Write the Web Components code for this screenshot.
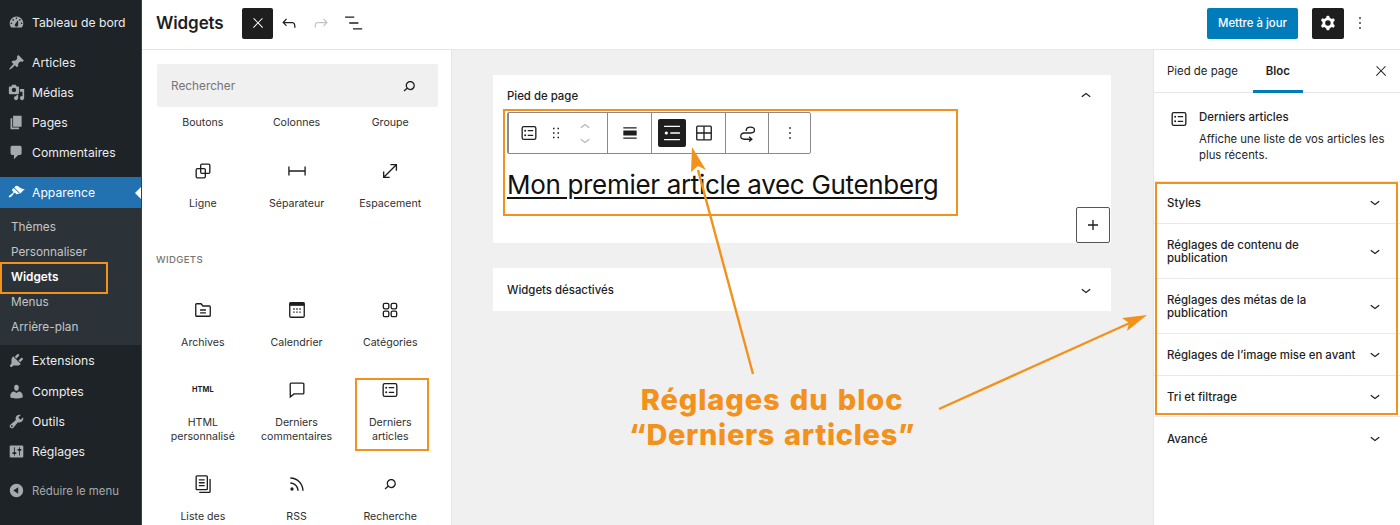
<!DOCTYPE html>
<html lang="fr">
<head>
<meta charset="utf-8">
<title>Widgets</title>
<style>
  html, body { margin: 0; height: 525px; overflow: hidden; background: #fff; }
  body { display: flex; font-family: Inter, "Liberation Sans", sans-serif; color: #1e1e1e; position: relative; }
</style>
</head>
<body>
  <admin-menu></admin-menu>
  <widgets-editor></widgets-editor>
  <note-overlay></note-overlay>

<script>
const ICONS = {
  // wp admin menu
  dashboard: '<path fill-rule="evenodd" d="M3.76 16h12.48c1.1-1.37 1.76-3.11 1.76-5 0-4.42-3.58-8-8-8s-8 3.58-8 8c0 1.89.66 3.63 1.76 5zM10 4c.55 0 1 .45 1 1s-.45 1-1 1-1-.45-1-1 .45-1 1-1zM6 6c.55 0 1 .45 1 1s-.45 1-1 1-1-.45-1-1 .45-1 1-1zm8 0c.55 0 1 .45 1 1s-.45 1-1 1-1-.45-1-1 .45-1 1-1zm-5.37 5.55L12 7v6c0 1.1-.9 2-2 2s-2-.9-2-2c0-.57.24-1.08.63-1.45zM4 10c.55 0 1 .45 1 1s-.45 1-1 1-1-.45-1-1 .45-1 1-1zm12 0c.55 0 1 .45 1 1s-.45 1-1 1-1-.45-1-1 .45-1 1-1z"/>',
  pin: '<path d="M10.44 3.02l1.82-1.82 6.36 6.35-1.83 1.82c-1.05-.68-2.48-.57-3.41.36l-.75.75c-.92.93-1.04 2.35-.35 3.41l-1.83 1.82-2.41-2.41-2.8 2.79c-.42.42-3.38 2.71-3.8 2.29s1.86-3.39 2.28-3.81l2.79-2.79L4.1 9.36l1.83-1.82c1.05.69 2.48.57 3.4-.36l.75-.75c.93-.92 1.05-2.35.36-3.41z"/>',
  media: '<path fill-rule="evenodd" d="M13 11V4c0-.55-.45-1-1-1h-1.67L9 1H5L3.67 3H2c-.55 0-1 .45-1 1v7c0 .55.45 1 1 1h10c.55 0 1-.45 1-1zM7 4.5c1.38 0 2.5 1.12 2.5 2.5S8.38 9.5 7 9.5 4.5 8.38 4.5 7 5.62 4.5 7 4.5zM14 6h5v10.5c0 1.38-1.12 2.5-2.5 2.5S14 17.88 14 16.5s1.12-2.5 2.5-2.5c.17 0 .34.02.5.05V9h-3V6zm-4 8.05V13h2v3.5c0 1.38-1.12 2.5-2.5 2.5S7 17.88 7 16.5 8.12 14 9.5 14c.17 0 .34.02.5.05z"/>',
  page: '<path d="M6 15V2h10v13H6zm-1 1h8v2H3V5h2v11z"/>',
  comments: '<path d="M5 2h9c1.1 0 2 .9 2 2v7c0 1.1-.9 2-2 2h-2l-5 5v-5H5c-1.1 0-2-.9-2-2V4c0-1.1.9-2 2-2z"/>',
  appearance: '<path d="M14.48 11.06L7.41 3.99l1.5-1.5c.5-.56 2.3-.47 3.51.32 1.21.8 1.43 1.28 2.91 2.1 1.18.64 2.45 1.26 4.45.85zm-.71.71L6.7 4.7 4.93 6.47c-.39.39-.39 1.02 0 1.41l1.06 1.06c.39.39.39 1.03 0 1.42-.6.6-1.43 1.11-2.21 1.69-.35.26-.7.53-1.01.84C1.43 13.23.4 14.75 1.1 15.5c.71.7 2.21-.33 3.55-1.67.31-.31.58-.66.84-1.01.58-.78 1.09-1.61 1.69-2.21.39-.39 1.02-.39 1.41 0l1.06 1.06c.39.39 1.02.39 1.41 0z"/>',
  plugins: '<path d="M13.11 4.36L9.87 7.6 8 5.73l3.24-3.24c.35-.34 1.05-.2 1.56.32.52.51.66 1.21.31 1.55zm-8 1.77l.91-1.12 9.01 9.01-1.19.84c-.71.71-2.63 1.16-3.82 1.16H6.14L4.9 17.26c-.59.59-1.54.59-2.12 0-.59-.58-.59-1.53 0-2.12l1.24-1.24v-3.88c0-1.13.4-3.19 1.09-3.89zm7.26 3.97l3.24-3.24c.34-.35 1.04-.21 1.55.31.52.51.66 1.21.31 1.55l-3.24 3.25z"/>',
  users: '<path d="M10 9.25c-2.27 0-2.73-3.44-2.73-3.44C7 4.02 7.82 2 9.97 2c2.16 0 2.98 2.02 2.71 3.81 0 0-.41 3.44-2.68 3.44zm0 2.57L12.72 10c2.39 0 4.52 2.33 4.52 4.53v2.49s-3.65 1.13-7.24 1.13c-3.65 0-7.24-1.13-7.24-1.13v-2.49c0-2.25 1.94-4.48 4.47-4.48z"/>',
  tools: '<path fill-rule="evenodd" d="M16.68 9.77c-1.34 1.34-3.3 1.67-4.95.99l-5.41 6.52c-.99.99-2.59.99-3.58 0s-.99-2.59 0-3.57l6.52-5.42c-.68-1.65-.35-3.61.99-4.95 1.28-1.28 3.12-1.62 4.72-1.06l-2.89 2.89 2.82 2.82 2.86-2.87c.53 1.58.18 3.39-1.08 4.65zM3.81 16.21c.4.39 1.04.39 1.43 0 .4-.4.4-1.04 0-1.43-.39-.4-1.03-.4-1.43 0-.39.39-.39 1.03 0 1.43z"/>',
  settings: '<path fill-rule="evenodd" d="M18 16V4c0-.55-.45-1-1-1H3c-.55 0-1 .45-1 1v12c0 .55.45 1 1 1h14c.55 0 1-.45 1-1zM8 11h1c.55 0 1 .45 1 1s-.45 1-1 1H8v1.5c0 .28-.22.5-.5.5s-.5-.22-.5-.5V13H6c-.55 0-1-.45-1-1s.45-1 1-1h1V5.5c0-.28.22-.5.5-.5s.5.22.5.5V11zm5-2h-1c-.55 0-1-.45-1-1s.45-1 1-1h1V5.5c0-.28.22-.5.5-.5s.5.22.5.5V7h1c.55 0 1 .45 1 1s-.45 1-1 1h-1v5.5c0 .28-.22.5-.5.5s-.5-.22-.5-.5V9z"/>',
  collapse: '<path fill-rule="evenodd" d="M10 2.16c4.33 0 7.84 3.51 7.84 7.84s-3.51 7.84-7.84 7.84S2.16 14.33 2.16 10 5.67 2.16 10 2.16zm2 11.72V6.12L6.18 10z"/>',
  // block editor
  close: '<path d="M13 11.8l6.1-6.3-1-1-6.1 6.2-6.1-6.2-1 1 6.1 6.3-6.5 6.7 1 1 6.5-6.6 6.5 6.6 1-1z"/>',
  undo: '<path d="M18.3 11.7c-.6-.6-1.4-.9-2.3-.9H6.7l2.9-3.3-1.1-1-4.5 5L8.5 16l1-1-2.7-2.7H16c.5 0 .9.2 1.3.5 1 1 1 3.4 1 4.5v.3h1.5v-.2c0-1.5 0-4.3-1.5-5.7z"/>',
  redo: '<path d="M15.6 6.5l-1.1 1 2.9 3.3H8c-.9 0-1.7.3-2.3.9-1.4 1.5-1.4 4.2-1.4 5.6v.2h1.5v-.3c0-1.1 0-3.5 1-4.5.3-.3.7-.5 1.3-.5h9.2L14.5 15l1.1 1.1 4.6-4.6-4.6-5z"/>',
  listview: '<path d="M2.5 4.2h11v1.6h-11zM7.5 11.2h11v1.6h-11zM12 18.2h11v1.6H12z"/>',
  search: '<path fill-rule="evenodd" d="M13.5 6C10.5 6 8 8.5 8 11.5c0 1.1.3 2.1.9 3l-3.4 3 1 1.1 3.4-2.9c1 .9 2.2 1.4 3.6 1.4 3 0 5.5-2.5 5.5-5.5C19 8.5 16.5 6 13.5 6zm0 9.5c-2.2 0-4-1.8-4-4s1.8-4 4-4 4 1.8 4 4-1.8 4-4 4z"/>',
  down: '<path d="M17.5 11.6L12 16l-5.5-4.4.9-1.2L12 14l4.5-3.6 1 1.2z"/>',
  up: '<path d="M6.5 12.4L12 8l5.5 4.4-.9 1.2L12 10l-4.5 3.6-1-1.2z"/>',
  plus: '<path d="M18 11.2h-5.2V6h-1.6v5.2H6v1.6h5.2V18h1.6v-5.2H18z"/>',
  more: '<path d="M13 19h-2v-2h2v2zm0-6h-2v-2h2v2zm0-6h-2V5h2v2z"/>',
  cog: '<path fill-rule="evenodd" d="M10.289 4.836A1 1 0 0111.275 4h1.306a1 1 0 01.987.836l.244 1.466c.787.26 1.503.679 2.108 1.218l1.393-.522a1 1 0 011.216.437l.653 1.13a1 1 0 01-.23 1.273l-1.148.944a6.025 6.025 0 010 2.435l1.149.946a1 1 0 01.23 1.272l-.653 1.13a1 1 0 01-1.216.437l-1.394-.522c-.605.54-1.32.958-2.108 1.218l-.244 1.466a1 1 0 01-.987.836h-1.306a1 1 0 01-.986-.836l-.244-1.466a5.995 5.995 0 01-2.108-1.218l-1.394.522a1 1 0 01-1.217-.436l-.653-1.131a1 1 0 01.23-1.272l1.149-.946a6.026 6.026 0 010-2.435l-1.148-.944a1 1 0 01-.23-1.272l.653-1.131a1 1 0 011.217-.437l1.393.522a5.994 5.994 0 012.108-1.218l.244-1.466zM14.929 12a3 3 0 11-6 0 3 3 0 016 0z"/>',
  postlist: '<g fill="none" stroke="currentColor" stroke-width="1.6"><rect x="3.8" y="4.3" width="16.4" height="15.4" rx="2"/><path d="M10.5 9.2h6.5M10.5 14.8h6.5"/></g><circle cx="7.4" cy="9.2" r="1.2"/><circle cx="7.4" cy="14.8" r="1.2"/>',
  drag: '<path d="M8 7h2V5H8v2zm0 6h2v-2H8v2zm0 6h2v-2H8v2zm6-14v2h2V5h-2zm0 8h2v-2h-2v2zm0 6h2v-2h-2v2z"/>',
  wide: '<path d="M4 5h16v1.6H4zM4 17.4h16V19H4zM4 9h16v6H4z"/>',
  listlayout: '<path d="M2.5 3.2h19v1.6h-19zM10 11.2h11.5v1.6H10zM2.5 19.2h19v1.6h-19z"/><circle cx="5.2" cy="12" r="1.9"/>',
  gridlayout: '<g fill="none" stroke="currentColor" stroke-width="1.6"><rect x="3.3" y="3.8" width="17.4" height="16.4" rx="1"/><path d="M12 4v16M3.5 12h17"/></g>',
  loop: '<path fill="none" stroke="currentColor" stroke-width="1.6" d="M11 9.5C11 6.5 13.5 5 16 5c3 0 5 1.5 5 3.5S19 12 16.5 12h-8C6 12 4.5 13.8 4.5 16c0 2.5 2 3.5 4.5 3.5h8"/><path fill="none" stroke="currentColor" stroke-width="1.6" d="M14.5 16.5l3.3 3-3.3 2.8"/>',
  row: '<g fill="none" stroke="currentColor" stroke-width="1.6"><rect x="9.2" y="3.8" width="11" height="11" rx="1.5"/><rect x="3.8" y="9.2" width="11" height="11" rx="1.5"/></g>',
  separator: '<path d="M2 11.2h20v1.6H2zM1.5 6.6h1.6v10.8H1.5zM20.9 6.6h1.6v10.8h-1.6z"/>',
  spacer: '<path d="M12.5 3.6v1.6h5.3L5.2 17.8v-5.3H3.6v8h8v-1.6H6.3L18.9 6.3v5.3h1.6v-8z"/>',
  archive: '<path fill="none" stroke="currentColor" stroke-width="1.6" d="M3.3 5.5a1 1 0 011-1h5.4l2.2 2.7h7.8a1 1 0 011 1v10.3a1 1 0 01-1 1H4.3a1 1 0 01-1-1zM8.5 12h7M8.5 15.5h7"/>',
  calendar: '<rect x="3.3" y="3.3" width="17.4" height="17.4" rx="1.5" fill="none" stroke="currentColor" stroke-width="1.6"/><path d="M3 3h18v4H3z"/><path d="M7.5 10h1.7v1.7H7.5zM11.15 10h1.7v1.7h-1.7zM14.8 10h1.7v1.7h-1.7zM7.5 13.7h1.7v1.7H7.5zM11.15 13.7h1.7v1.7h-1.7zM14.8 13.7h1.7v1.7h-1.7z"/>',
  categories: '<g fill="none" stroke="currentColor" stroke-width="1.6"><rect x="4" y="4" width="6.6" height="6.6" rx="1.8"/><rect x="13.4" y="4" width="6.6" height="6.6" rx="1.8"/><rect x="4" y="13.4" width="6.6" height="6.6" rx="1.8"/><rect x="13.4" y="13.4" width="6.6" height="6.6" rx="1.8"/></g>',
  comment: '<path fill="none" stroke="currentColor" stroke-width="1.6" d="M5 3.8h14A1.2 1.2 0 0120.2 5v10.5a1.2 1.2 0 01-1.2 1.2H8.5L4 20.2 3.8 5A1.2 1.2 0 015 3.8z"/>',
  pagelist: '<g fill="none" stroke="currentColor" stroke-width="1.6"><path d="M4.8 2.3h11.4a1 1 0 011 1v14.4a1 1 0 01-1 1H4.8a1 1 0 01-1-1V3.3a1 1 0 011-1zM20.5 6v15a1 1 0 01-1 1H7.5M7 7h7M7 10.5h7M7 14h7"/></g>',
  rss: '<path d="M4 10v1.7c4.6 0 8.3 3.7 8.3 8.3H14c0-5.5-4.5-10-10-10zM4 4v1.7c7.9 0 14.3 6.4 14.3 14.3H20C20 11.2 12.8 4 4 4z"/><circle cx="6" cy="18" r="2"/>'
};

class WpIcon extends HTMLElement {
  connectedCallback() {
    const size = this.getAttribute('size') || 20;
    const box = this.getAttribute('box') || 24;
    this.attachShadow({ mode: 'open' });
    this.shadowRoot.innerHTML = `
      <style>
        :host { display: inline-flex; width: ${size}px; height: ${size}px; flex: none; }
        svg { width: 100%; height: 100%; fill: currentColor; display: block; }
      </style>
      <svg viewBox="0 0 ${box} ${box}">${ICONS[this.getAttribute('name')] || ''}</svg>`;
  }
}
customElements.define('wp-icon', WpIcon);

class AdminMenu extends HTMLElement {
  connectedCallback() {
    const item = (icon, label, cls = '') => `
      <a class="item ${cls}"><wp-icon name="${icon}" box="20" size="17"></wp-icon><span>${label}</span></a>`;
    this.attachShadow({ mode: 'open' });
    this.shadowRoot.innerHTML = `
      <style>
        :host { display: block; flex: none; height: 525px; background: #1d2327; border-right: 1px solid #3c4043; font-size: 12.2px; color: #eceded; padding-top: 7px; box-sizing: border-box; width: 142px; }
        .item { display: flex; align-items: center; height: 30px; padding-left: 8px; gap: 7px; }
        .item wp-icon { color: #a7aaad; }
        .gap { height: 10px; }
        .current { background: #2271b1; color: #fff; position: relative; height: 31px; }
        .current wp-icon { color: #fff; }
        .current::after { content: ""; position: absolute; right: 0; top: 10px; border: 6px solid transparent; border-right-color: #fff; border-left-width: 0; }
        .sub { background: #2c3338; padding: 6px 0; font-size: 11.8px; color: #c3c5c7; }
        .sub a { display: flex; align-items: center; height: 25px; padding-left: 11px; }
        .sub a.on { color: #fff; font-weight: 600; }
        .ext { height: 31px; padding-bottom: 1px; box-sizing: border-box; }
        .fold { color: #a7aaad; margin-top: 9px; font-size: 11.4px; height: 31px; }
      </style>
      ${item('dashboard', 'Tableau de bord')}
      <div class="gap"></div>
      ${item('pin', 'Articles')}
      ${item('media', 'Médias')}
      ${item('page', 'Pages')}
      ${item('comments', 'Commentaires')}
      <div class="gap"></div>
      ${item('appearance', 'Apparence', 'current')}
      <div class="sub">
        <a>Thèmes</a><a>Personnaliser</a><a class="on">Widgets</a><a>Menus</a><a>Arrière-plan</a>
      </div>
      ${item('plugins', 'Extensions', 'ext')}
      ${item('users', 'Comptes')}
      ${item('tools', 'Outils')}
      ${item('settings', 'Réglages')}
      ${item('collapse', 'Réduire le menu', 'fold')}`;
  }
}
customElements.define('admin-menu', AdminMenu);

class WidgetsEditor extends HTMLElement {
  connectedCallback() {
    this.attachShadow({ mode: 'open' });
    this.shadowRoot.innerHTML = `
      <style>
        :host { display: flex; flex-direction: column; flex: 1; min-width: 0; height: 525px; }
        .body { display: flex; flex: 1; min-height: 0; }
      </style>
      <editor-header></editor-header>
      <div class="body">
        <block-inserter></block-inserter>
        <widget-canvas></widget-canvas>
        <settings-panel></settings-panel>
      </div>`;
  }
}
customElements.define('widgets-editor', WidgetsEditor);

class EditorHeader extends HTMLElement {
  connectedCallback() {
    this.attachShadow({ mode: 'open' });
    this.shadowRoot.innerHTML = `
      <style>
        :host { display: flex; align-items: center; height: 50px; flex: none; box-sizing: border-box; border-bottom: 1px solid #e6e6e6; padding: 0 28px 3px 14px; background: #fff; }
        h1 { font-size: 17px; font-weight: 600; margin: 0; width: 86px; letter-spacing: -.1px; }
        .btn { width: 31px; height: 31px; display: flex; align-items: center; justify-content: center; }
        .dark { background: #1e1e1e; color: #fff; border-radius: 2px; }
        .tool { width: 32px; }
        .dis { color: #c4c4c4; }
        .spacer { flex: 1; }
        .update { background: #007cba; color: #fff; height: 31px; width: 91px; border-radius: 2px; font-size: 11.4px; font-weight: 500; display: flex; align-items: center; justify-content: center; margin-right: 14px; }
        .more { margin-left: 4px; }
      </style>
      <h1>Widgets</h1>
      <div class="btn dark"><wp-icon name="close" size="16"></wp-icon></div>
      <div class="btn tool"><wp-icon name="undo"></wp-icon></div>
      <div class="btn tool dis"><wp-icon name="redo"></wp-icon></div>
      <div class="btn tool"><wp-icon name="listview"></wp-icon></div>
      <div class="spacer"></div>
      <div class="update">Mettre à jour</div>
      <div class="btn dark" style="width:32px"><wp-icon name="cog" size="22"></wp-icon></div>
      <div class="btn more" style="width:24px"><wp-icon name="more"></wp-icon></div>`;
  }
}
customElements.define('editor-header', EditorHeader);

class InserterItem extends HTMLElement {
  connectedCallback() {
    const icon = this.getAttribute('icon');
    const pic = icon === 'html' ? '<b class="html">HTML</b>' : icon ? `<wp-icon name="${icon}" size="20"></wp-icon>` : '';
    this.attachShadow({ mode: 'open' });
    this.shadowRoot.innerHTML = `
      <style>
        :host { display: flex; flex-direction: column; align-items: center; text-align: center; font-size: 10.6px; line-height: 13.5px; color: #2f2f2f; }
        .pic { height: 24px; display: flex; align-items: center; justify-content: center; margin-bottom: 14px; color: #1e1e1e; }
        .html { font-size: 7.4px; letter-spacing: .1px; font-weight: 700; }
      </style>
      ${icon ? `<div class="pic">${pic}</div>` : ''}
      <slot></slot>`;
  }
}
customElements.define('inserter-item', InserterItem);

class BlockInserter extends HTMLElement {
  connectedCallback() {
    this.attachShadow({ mode: 'open' });
    this.shadowRoot.innerHTML = `
      <style>
        :host { display: block; width: 310px; flex: none; box-sizing: border-box; padding: 14px 14px 0 14px; background: #fff; overflow: hidden; border-right: 1px solid #e6e6e6; }
        .search { height: 43px; background: #f0f0f0; border-radius: 2px; display: flex; align-items: center; justify-content: space-between; padding: 0 19px 0 14px; margin-left: 1px; font-size: 11.8px; color: #757575; width: 281px; box-sizing: border-box; }
        .search wp-icon { color: #1e1e1e; }
        .grid { display: grid; grid-template-columns: repeat(3, 93.7px); width: 281px; }
        .r1 { margin-top: 9px; margin-bottom: 29px; }
        .row2 { row-gap: 28.5px; }
        h2 { font-size: 9.6px; font-weight: 500; letter-spacing: .35px; color: #757575; margin: 0; line-height: 12px; }
        .sec { margin: 44px 0 32px; }
      </style>
      <div class="search"><span>Rechercher</span><wp-icon name="search" size="20"></wp-icon></div>
      <div class="grid r1">
        <inserter-item>Boutons</inserter-item>
        <inserter-item>Colonnes</inserter-item>
        <inserter-item>Groupe</inserter-item>
      </div>
      <div class="grid">
        <inserter-item icon="row">Ligne</inserter-item>
        <inserter-item icon="separator">Séparateur</inserter-item>
        <inserter-item icon="spacer">Espacement</inserter-item>
      </div>
      <h2 class="sec">WIDGETS</h2>
      <div class="grid row2">
        <inserter-item icon="archive">Archives</inserter-item>
        <inserter-item icon="calendar">Calendrier</inserter-item>
        <inserter-item icon="categories">Catégories</inserter-item>
        <inserter-item icon="html">HTML personnalisé</inserter-item>
        <inserter-item icon="comment">Derniers commentaires</inserter-item>
        <inserter-item icon="postlist">Derniers<br>articles</inserter-item>
        <inserter-item icon="pagelist">Liste des</inserter-item>
        <inserter-item icon="rss">RSS</inserter-item>
        <inserter-item icon="search">Recherche</inserter-item>
      </div>`;
  }
}
customElements.define('block-inserter', BlockInserter);

class BlockToolbar extends HTMLElement {
  connectedCallback() {
    this.attachShadow({ mode: 'open' });
    this.shadowRoot.innerHTML = `
      <style>
        :host { display: flex; width: 304px; height: 42px; box-sizing: border-box; border: 1px solid #8a8a8a; border-radius: 2px; background: #fff; color: #1e1e1e; }
        .grp { display: flex; align-items: center; justify-content: center; border-left: 1px solid #8a8a8a; box-sizing: border-box; height: 100%; }
        .grp:first-child { border-left: 0; }
        .on { width: 28px; height: 28px; background: #1e1e1e; color: #fff; border-radius: 2px; display: flex; align-items: center; justify-content: center; }
        .plain { width: 28px; height: 28px; display: flex; align-items: center; justify-content: center; }
        .drag { margin-left: 4px; }
        .mover { display: flex; flex-direction: column; color: #b5b5b5; margin-left: 10px; }
        .mover wp-icon { margin: -3.5px 0; }
      </style>
      <div class="grp" style="width:99px;justify-content:flex-start;padding-left:6px">
        <div class="plain"><wp-icon name="postlist"></wp-icon></div>
        <wp-icon class="drag" name="drag" size="18"></wp-icon>
        <div class="mover"><wp-icon name="up"></wp-icon><wp-icon name="down"></wp-icon></div>
      </div>
      <div class="grp" style="width:44px"><wp-icon name="wide"></wp-icon></div>
      <div class="grp" style="width:74px;gap:4px;justify-content:flex-start;padding-left:6px">
        <div class="on"><wp-icon name="listlayout"></wp-icon></div>
        <div class="plain"><wp-icon name="gridlayout"></wp-icon></div>
      </div>
      <div class="grp" style="width:43px"><wp-icon name="loop"></wp-icon></div>
      <div class="grp" style="flex:1"><wp-icon name="more"></wp-icon></div>`;
  }
}
customElements.define('block-toolbar', BlockToolbar);

class WidgetCanvas extends HTMLElement {
  connectedCallback() {
    this.attachShadow({ mode: 'open' });
    this.shadowRoot.innerHTML = `
      <style>
        :host { display: block; flex: 1; min-width: 0; background: #f0f0f0; padding: 25px 42px 0 41px; box-sizing: border-box; }
        .card { background: #fff; }
        .head { display: flex; align-items: center; justify-content: space-between; padding: 0 15px 0 14px; font-size: 11.4px; font-weight: 500; color: #1e1e1e; height: 43px; }
        .open .head { height: 37px; padding-top: 5px; box-sizing: border-box; }
        .content { padding: 0 1px 0 14px; display: flex; flex-direction: column; }
        .title { font-size: 26px; line-height: 34px; margin-top: 14px; color: #111; text-decoration: underline; text-decoration-thickness: 1.5px; text-underline-offset: 3px; font-weight: 400; letter-spacing: -.32px; white-space: nowrap; }
        .add { align-self: flex-end; width: 34px; height: 36px; box-sizing: border-box; border: 1px solid #555; border-radius: 2px; display: flex; align-items: center; justify-content: center; background: #fff; margin-top: 5px; }
        .second { margin-top: 25px; }
      </style>
      <div class="card open">
        <div class="head"><span>Pied de page</span><wp-icon name="up"></wp-icon></div>
        <div class="content">
          <block-toolbar></block-toolbar>
          <div class="title">Mon premier article avec Gutenberg</div>
          <div class="add"><wp-icon name="plus"></wp-icon></div>
        </div>
      </div>
      <div class="card second">
        <div class="head"><span>Widgets désactivés</span><wp-icon name="down"></wp-icon></div>
      </div>`;
  }
}
customElements.define('widget-canvas', WidgetCanvas);

class PanelRow extends HTMLElement {
  connectedCallback() {
    this.attachShadow({ mode: 'open' });
    this.shadowRoot.innerHTML = `
      <style>
        :host { display: flex; align-items: center; justify-content: space-between; box-sizing: border-box; padding: 15px 15px 12px 13px; border-top: 1px solid #e9e9e9; font-size: 11.45px; line-height: 13.6px; font-weight: 500; color: #1e1e1e; gap: 6px; }
        wp-icon { margin: -6.5px 0 -3.5px; }
      </style>
      <span><slot></slot></span>
      <wp-icon name="down"></wp-icon>`;
  }
}
customElements.define('panel-row', PanelRow);

class SettingsPanel extends HTMLElement {
  connectedCallback() {
    this.attachShadow({ mode: 'open' });
    this.shadowRoot.innerHTML = `
      <style>
        :host { display: block; width: 247px; flex: none; background: #fff; border-left: 1px solid #e6e6e6; box-sizing: border-box; color: #1e1e1e; }
        .tabs { display: flex; align-items: center; height: 43px; border-bottom: 1px solid #e6e6e6; padding: 0 11px 0 13px; font-size: 11.4px; position: relative; box-sizing: border-box; }
        .tab { height: 100%; display: flex; align-items: center; box-sizing: border-box; }
        .active { font-weight: 600; margin-left: 28px; position: relative; }
        .active::after { content: ""; position: absolute; left: -13px; right: -13px; bottom: -1px; height: 3px; background: #007cba; }
        .x { margin-left: auto; }
        .card { display: flex; gap: 10px; padding: 16px 14px 18px 15px; font-size: 11.3px; line-height: 16px; }
        .card b { font-weight: 500; display: block; margin-bottom: 6px; font-size: 11.4px; }
        .last { padding-top: 16px; padding-bottom: 14px; }
      </style>
      <div class="tabs">
        <div class="tab">Pied de page</div>
        <div class="tab active">Bloc</div>
        <wp-icon class="x" name="close" size="16"></wp-icon>
      </div>
      <div class="card">
        <wp-icon name="postlist"></wp-icon>
        <div><b>Derniers articles</b>Affiche une liste de vos articles les plus récents.</div>
      </div>
      <panel-row>Styles</panel-row>
      <panel-row>Réglages de contenu de publication</panel-row>
      <panel-row>Réglages des métas de la publication</panel-row>
      <panel-row>Réglages de l’image mise en avant</panel-row>
      <panel-row>Tri et filtrage</panel-row>
      <panel-row class="last">Avancé</panel-row>`;
  }
}
customElements.define('settings-panel', SettingsPanel);

// orange notes drawn on top of the screenshot
class NoteOverlay extends HTMLElement {
  connectedCallback() {
    this.attachShadow({ mode: 'open' });
    this.shadowRoot.innerHTML = `
      <style>
        :host { position: absolute; left: 0; top: 0; width: 1400px; height: 525px; pointer-events: none; }
        svg { position: absolute; inset: 0; }
        rect, line { fill: none; stroke: #f2911b; stroke-width: 2; }
        line { stroke-width: 2.4; }
        polygon { fill: #f2911b; }
        .cap { position: absolute; left: 572px; top: 382px; width: 400px; text-align: center; color: #f2911b; font-size: 29px; line-height: 35px; font-weight: 800; letter-spacing: .9px; word-spacing: 2px; white-space: nowrap; }
        .l2 { letter-spacing: .65px; }
      </style>
      <svg width="1400" height="525">
        <rect x="1" y="263" width="106" height="30"/>
        <rect x="356" y="379" width="72" height="71"/>
        <rect x="504" y="110" width="453" height="105"/>
        <rect x="1156" y="183" width="241" height="231"/>
        <line x1="753" y1="374" x2="698" y2="170"/>
        <polygon points="692,147 706,170 698,166 691,172"/>
        <line x1="939" y1="409" x2="1132" y2="322"/>
        <polygon points="1147,315 1122,318 1129,323 1127,331"/>
      </svg>
      <div class="cap">Réglages du bloc<br><span class="l2">“Derniers articles”</span></div>`;
  }
}
customElements.define('note-overlay', NoteOverlay);
</script>
</body>
</html>
